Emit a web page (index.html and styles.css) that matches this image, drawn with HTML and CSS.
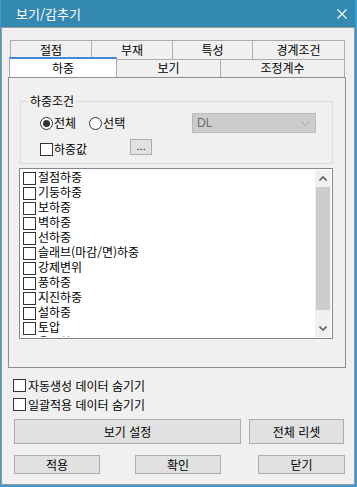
FILE: index.html
```html
<!DOCTYPE html>
<html lang="ko">
<head>
<meta charset="utf-8">
<link rel="stylesheet" href="styles.css">
</head>
<body>
<div class="window">
  <div class="titlebar">
    <span class="title">보기/감추기</span>
    <svg class="close" width="10" height="10" viewBox="0 0 10 10"><path d="M0.5 0.5 L9.5 9.5 M9.5 0.5 L0.5 9.5" stroke="#fff" stroke-width="1.1" fill="none"/></svg>
  </div>
  <div class="client">
    <div class="tabs">
      <div class="tabrow back">
        <div class="tab w82">절점</div>
        <div class="tab w82">부재</div>
        <div class="tab w81">특성</div>
        <div class="tab w93">경계조건</div>
      </div>
      <div class="tabrow front">
        <div class="tab sel">하중</div>
        <div class="tab un w105">보기</div>
        <div class="tab un w125">조정계수</div>
      </div>
      <div class="panel">
        <fieldset class="group">
          <legend>하중조건</legend>
          <div class="grow1">
            <span class="radio on"></span><span class="rlabel">전체</span>
            <span class="radio second"></span><span class="rlabel">선택</span>
            <div class="combo"><span>DL</span>
              <svg width="9" height="5" viewBox="0 0 9 5"><path d="M0.5 0.5 L4.5 4.5 L8.5 0.5" stroke="#a8a8a8" fill="none"/></svg>
            </div>
          </div>
          <div class="grow2">
            <span class="cb"></span><span class="cblabel">하중값</span>
            <div class="dots">...</div>
          </div>
        </fieldset>
        <div class="list">
          <div class="items">
            <div class="item"><span class="cb"></span><span class="itext">절점하중</span></div>
            <div class="item"><span class="cb"></span><span class="itext">기둥하중</span></div>
            <div class="item"><span class="cb"></span><span class="itext">보하중</span></div>
            <div class="item"><span class="cb"></span><span class="itext">벽하중</span></div>
            <div class="item"><span class="cb"></span><span class="itext">선하중</span></div>
            <div class="item"><span class="cb"></span><span class="itext">슬래브(마감/면)하중</span></div>
            <div class="item"><span class="cb"></span><span class="itext">강제변위</span></div>
            <div class="item"><span class="cb"></span><span class="itext">풍하중</span></div>
            <div class="item"><span class="cb"></span><span class="itext">지진하중</span></div>
            <div class="item"><span class="cb"></span><span class="itext">설하중</span></div>
            <div class="item"><span class="cb"></span><span class="itext">토압</span></div>
            <div class="item"><span class="cb"></span><span class="itext">온도하중</span></div>
          </div>
          <div class="scrollbar">
            <div class="arrow"><svg width="8" height="5" viewBox="0 0 8 5"><path d="M0.5 4.5 L4 1 L7.5 4.5" stroke="#606060" stroke-width="1.6" fill="none"/></svg></div>
            <div class="track"><div class="thumb"></div></div>
            <div class="arrow"><svg width="8" height="5" viewBox="0 0 8 5"><path d="M0.5 0.5 L4 4 L7.5 0.5" stroke="#606060" stroke-width="1.6" fill="none"/></svg></div>
          </div>
        </div>
      </div>
    </div>
    <div class="opts">
      <div class="opt"><span class="cb"></span><span class="optlabel">자동생성 데이터 숨기기</span></div>
      <div class="opt"><span class="cb"></span><span class="optlabel">일괄적용 데이터 숨기기</span></div>
    </div>
    <div class="btnrow1">
      <div class="btn big w227">보기 설정</div>
      <div class="btn big w95">전체 리셋</div>
    </div>
    <div class="btnrow2">
      <div class="btn small">적용</div>
      <div class="btn small b2">확인</div>
      <div class="btn small b3">닫기</div>
    </div>
  </div>
</div>
</body>
</html>
```
FILE: styles.css
```css
* { box-sizing: border-box; }
html, body { margin: 0; padding: 0; }
body {
  background: #f0f0f0;
  font-family: "Noto Sans CJK KR", "Noto Sans", sans-serif;
  font-size: 12px;
  color: #000;
}
.window {
  width: 357px;
  height: 487px;
  border-left: 1px solid #3c9ad0;
  border-right: 2px solid #3c9ad0;
  border-bottom: 2px solid #3c9ad0;
  display: flex;
  flex-direction: column;
}
.titlebar {
  height: 27px;
  background: #3489b0;
  display: flex;
  align-items: center;
  justify-content: space-between;
  padding: 0 8px 0 15px;
  flex: none;
}
.title { color: #fff; font-size: 13px; line-height: 14px; }
.close { display: block; margin-top: 1px; }
.client {
  height: 458px;
  border: 1px solid #9a9a9a;
  background: #f0f0f0;
  display: flex;
  flex-direction: column;
}
.tabs { margin: 12px 0 0 6px; width: 338px; }
.tabrow { display: flex; }
.tabrow.back { height: 19px; padding-left: 2px; }
.tab {
  border: 1px solid #acacac;
  border-bottom: none;
  background: #f0f0f0;
  text-align: center;
  line-height: 17px;
  height: 19px;
}
.tabrow.back .tab + .tab { margin-left: -1px; }
.w82 { width: 82px; }
.w81 { width: 81px; }
.w93 { width: 93px; }
.w105 { width: 105px; }
.w125 { width: 125px; }
.tabrow.front { height: 20px; margin-top: -2px; align-items: flex-start; }
.tab.sel {
  margin-left: 1px;
  width: 108px;
  height: 20px;
  border-top: 2px solid #428bdb;
  background: #fff;
  position: relative;
  line-height: 17px;
}
.tab.un { margin-top: 2px; height: 18px; margin-left: -1px; line-height: 16px; }
.panel {
  border: 1px solid #8c8e92;
  height: 291px;
}
.group {
  margin: 16px 0 0 11px;
  padding: 5px 0 6px 7px;
  border: 1px solid #dcdcdc;
  width: 313px;
  min-width: 0;
}
.group legend { padding: 0 2px; line-height: 14px; }
.grow1 { display: flex; align-items: center; height: 20px; padding-left: 12px; }
.radio {
  width: 13px; height: 13px;
  border: 1px solid #333;
  border-radius: 50%;
  background: #fff;
  display: flex; align-items: center; justify-content: center;
  flex: none;
}
.radio.on::after {
  content: "";
  width: 7px; height: 7px;
  border-radius: 50%;
  background: #333;
}
.radio.second { margin-left: 13px; }
.rlabel { margin-left: 1px; line-height: 14px; }
.combo {
  margin-left: auto;
  margin-right: 16px;
  width: 124px;
  height: 20px;
  background: #cccccc;
  border: 1px solid #bcbcbc;
  color: #6d6d6d;
  font-family: "Liberation Sans", sans-serif;
  font-size: 12px;
  display: flex; align-items: center; justify-content: space-between;
  padding: 0 5px 0 4px;
}
.combo svg { display: block; }
.grow2 { display: flex; align-items: flex-start; margin-top: 6px; padding-left: 12px; height: 18px; }
.cb {
  width: 13px; height: 13px;
  border: 1px solid #333;
  background: #fff;
  flex: none;
  display: block;
}
.grow2 .cb { margin-top: 4px; }
.cblabel { margin-left: 1px; line-height: 14px; margin-top: 3px; }
.dots {
  margin-left: 43px;
  width: 22px; height: 16px;
  background: #e1e1e1;
  border: 1px solid #adadad;
  font-family: "Liberation Sans", sans-serif;
  font-size: 11px;
  line-height: 13px;
  text-align: center;
}
.list {
  margin: 4px 0 0 10px;
  width: 314px;
  height: 171px;
  border: 1px solid #828790;
  padding: 1px;
  background: #fff;
  display: flex;
}
.items { flex: 1; overflow: hidden; padding-left: 2px; }
.item { display: flex; height: 15px; align-items: flex-start; white-space: nowrap; }
.item .cb { margin-top: 2px; margin-right: 2px; }
.itext { display: block; height: 15px; line-height: 14px; }
.scrollbar { width: 16px; display: flex; flex-direction: column; background: #f0f0f0; }
.arrow { height: 17px; display: flex; align-items: center; justify-content: center; flex: none; }
.track { flex: 1; }
.thumb { height: 123px; background: #cdcdcd; margin: 0 1px; }
.opts { margin: 11px 0 0 11px; display: flex; flex-direction: column; gap: 6px; }
.opt { display: flex; align-items: center; height: 13px; }
.optlabel { margin-left: 2px; line-height: 14px; }
.btnrow1 { display: flex; margin: 8px 0 0 12px; gap: 8px; }
.btn {
  background: #e1e1e1;
  border: 1px solid #adadad;
  display: flex; align-items: center; justify-content: center;
}
.btn.big { height: 25px; }
.w227 { width: 227px; }
.w95 { width: 95px; }
.btnrow2 { display: flex; margin: 11px 0 0 12px; }
.btn.small { height: 19px; width: 86px; }
.btn.b2 { margin-left: 35px; }
.btn.b3 { margin-left: 37px; width: 87px; }
```
